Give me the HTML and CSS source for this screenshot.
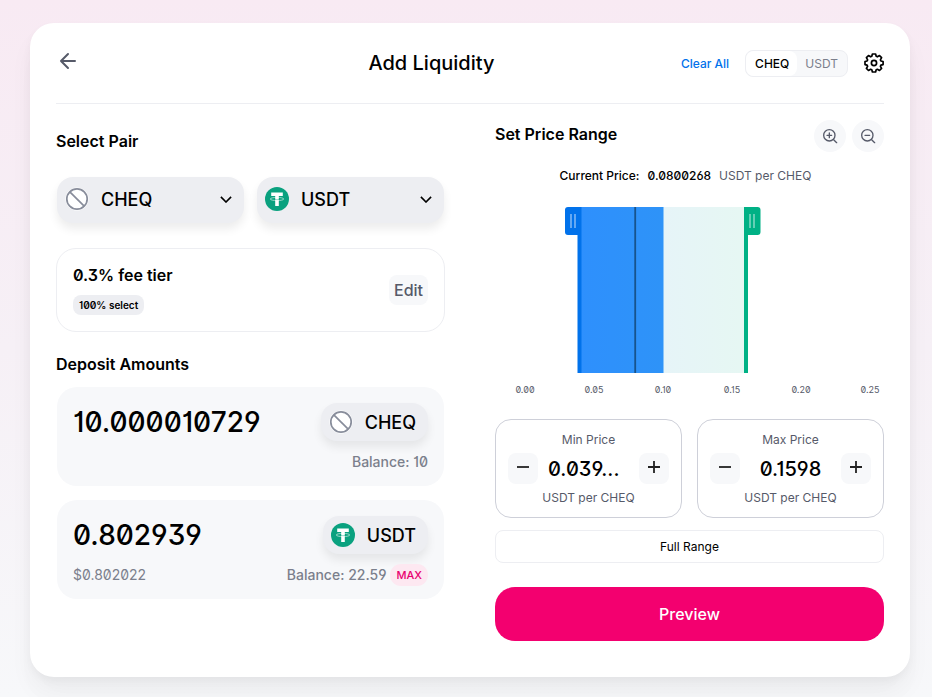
FILE: index.html
```html
<!DOCTYPE html>
<html lang="en">
<head>
<meta charset="utf-8">
<meta name="viewport" content="width=device-width, initial-scale=1">
<title>Add Liquidity</title>
<link rel="stylesheet" href="styles.css">
</head>
<body>
<svg class="defs" width="0" height="0" aria-hidden="true">
  <symbol id="token-empty" viewBox="0 0 24 24">
    <circle cx="12" cy="12" r="11.5" fill="#fff"/>
    <circle cx="12" cy="12" r="10.2" fill="none" stroke="#888d9b" stroke-width="1.7"/>
    <path d="M4.8 4.8 19.2 19.2" stroke="#888d9b" stroke-width="1.7"/>
  </symbol>
  <symbol id="token-usdt" viewBox="0 0 24 24">
    <circle cx="12" cy="12" r="12" fill="#0aa17f"/>
    <ellipse cx="12" cy="12" rx="6.800" ry="1.6" fill="none" stroke="#a5dccd" stroke-width=".9"/>
    <path d="M6.200 5.600h11.600v3.400H13.800v10h-3.600V9H6.200z" fill="#fff"/>
    <path d="M9 12.400q3 .6 6 0" fill="none" stroke="#0aa17f" stroke-width=".4"/>
  </symbol>
  <symbol id="chevron" viewBox="0 0 12 7">
    <path d="M.9.9 6 6 11.1.9" fill="none" stroke="#000" stroke-width="1.6"/>
  </symbol>
</svg>
<main class="card">
  <header class="header">
    <a class="back" href="#" aria-label="Back">
      <svg width="24" height="24" viewBox="0 0 24 24" fill="none" stroke="#565a69" stroke-width="2" stroke-linecap="round" stroke-linejoin="round"><path d="M19 12H5M12 19 5 12 12 5"/></svg>
    </a>
    <h1 class="title">Add Liquidity</h1>
    <div class="actions">
      <button class="clear" type="button">Clear All</button>
      <div class="toggle">
        <button class="toggle-item active" type="button">CHEQ</button>
        <button class="toggle-item" type="button">USDT</button>
      </div>
      <button class="settings" type="button" aria-label="Settings">
        <svg width="20" height="20" viewBox="0 0 20 20" fill="none" stroke="#000" stroke-width="1.700" stroke-linejoin="round"><circle cx="10" cy="10" r="2.600"/><path d="M8.400 1h3.200l.6 2.300 1.200.5 2.100-1.200 2.100 2.100-1.200 2.100.5 1.200 2.200.5v3.100l-2.200.5-.5 1.200 1.200 2.100-2.100 2.100-2.100-1.200-1.200.5-.6 2.200H8.400l-.6-2.200-1.200-.5-2.100 1.200-2.100-2.100 1.200-2.100-.5-1.200L1 11.600V8.500L3.100 8l.5-1.200-1.200-2.100 2.100-2.100 2.100 1.200 1.200-.5z"/></svg>
      </button>
    </div>
  </header>

  <div class="columns">
    <section class="left">
      <h2 class="heading">Select Pair</h2>
      <div class="pair">
        <button class="token-select" type="button"><svg class="token"><use href="#token-empty"/></svg><span class="symbol">CHEQ</span><svg class="chevron"><use href="#chevron"/></svg></button>
        <button class="token-select" type="button"><svg class="token"><use href="#token-usdt"/></svg><span class="symbol">USDT</span><svg class="chevron"><use href="#chevron"/></svg></button>
      </div>
      <div class="fee">
        <div class="fee-info">
          <div class="fee-name">0.3% fee tier</div>
          <div class="badge">100% select</div>
        </div>
        <button class="edit" type="button">Edit</button>
      </div>
      <h2 class="heading">Deposit Amounts</h2>
      <div class="deposits">
        <div class="deposit">
          <div class="row">
            <input class="amount" type="text" aria-label="CHEQ amount" value="10.000010729">
            <button class="pill" type="button"><svg class="token"><use href="#token-empty"/></svg>CHEQ</button>
          </div>
          <div class="row detail">
            <span></span>
            <span class="balance">Balance: 10</span>
          </div>
        </div>
        <div class="deposit">
          <div class="row">
            <input class="amount" type="text" aria-label="USDT amount" value="0.802939">
            <button class="pill" type="button"><svg class="token"><use href="#token-usdt"/></svg>USDT</button>
          </div>
          <div class="row detail">
            <span class="fiat">$0.802022</span>
            <span class="balance">Balance: 22.59 <button class="max" type="button">MAX</button></span>
          </div>
        </div>
      </div>
    </section>

    <section class="right">
      <div class="range-head">
        <h2 class="heading">Set Price Range</h2>
        <div class="zooms">
          <button class="zoom" type="button" aria-label="Zoom in"><svg width="16" height="16" viewBox="0 0 24 24" fill="none" stroke="#565a69" stroke-width="2" stroke-linecap="round" stroke-linejoin="round"><circle cx="11" cy="11" r="8.500"/><path d="m22 22-4.500-4.500M11 7.500v7M7.500 11h7"/></svg></button>
          <button class="zoom" type="button" aria-label="Zoom out"><svg width="16" height="16" viewBox="0 0 24 24" fill="none" stroke="#565a69" stroke-width="2" stroke-linecap="round" stroke-linejoin="round"><circle cx="11" cy="11" r="8.500"/><path d="m22 22-4.500-4.500M7.500 11h7"/></svg></button>
        </div>
      </div>
      <p class="current"><span>Current Price:</span><span>0.0800268</span><span class="unit">USDT per CHEQ</span></p>
      <svg class="chart" viewBox="0 0 389 196" role="img" aria-label="Liquidity by price">
        <defs>
          <linearGradient id="range"><stop offset="0" stop-color="#0172eb"/><stop offset="1" stop-color="#00b185"/></linearGradient>
        </defs>
        <rect x="83" y="4" width="85.500" height="166" fill="#3393ff"/>
        <rect x="83" y="4" width="168" height="166" fill="url(#range)" opacity=".1"/>
        <rect x="139.300" y="4" width="1.800" height="166" fill="#17538c"/>
        <path d="M86.500 4V170h-4V32H73q-3 0-3-3V7q0-3 3-3z" fill="#0172eb"/>
        <path d="M249 4V170h4V32h9.500q3 0 3-3V7q0-3-3-3z" fill="#00b185"/>
        <path d="M76 11v14M80 11v14M255 11v14M259 11v14" stroke="#fff" stroke-opacity=".65" stroke-width="1.200"/>
        <g class="ticks">
          <text x="30" y="190">0.00</text>
          <text x="99" y="190">0.05</text>
          <text x="168" y="190">0.10</text>
          <text x="237" y="190">0.15</text>
          <text x="306" y="190">0.20</text>
          <text x="375" y="190">0.25</text>
        </g>
      </svg>
      <div class="prices">
        <div class="price">
          <label class="price-label" for="min">Min Price</label>
          <div class="stepper">
            <button class="step" type="button" aria-label="Decrease min price"><svg width="14" height="14" viewBox="0 0 14 14"><path d="M1 7h12" stroke="#222" stroke-width="1.800"/></svg></button>
            <input class="price-value truncated" id="min" type="text" value="0.039...">
            <button class="step" type="button" aria-label="Increase min price"><svg width="14" height="14" viewBox="0 0 14 14"><path d="M1 7h12M7 1v12" stroke="#222" stroke-width="1.800"/></svg></button>
          </div>
          <span class="price-label">USDT per CHEQ</span>
        </div>
        <div class="price">
          <label class="price-label" for="max">Max Price</label>
          <div class="stepper">
            <button class="step" type="button" aria-label="Decrease max price"><svg width="14" height="14" viewBox="0 0 14 14"><path d="M1 7h12" stroke="#222" stroke-width="1.800"/></svg></button>
            <input class="price-value" id="max" type="text" value="0.1598">
            <button class="step" type="button" aria-label="Increase max price"><svg width="14" height="14" viewBox="0 0 14 14"><path d="M1 7h12M7 1v12" stroke="#222" stroke-width="1.800"/></svg></button>
          </div>
          <span class="price-label">USDT per CHEQ</span>
        </div>
      </div>
      <button class="full" type="button">Full Range</button>
      <button class="preview" type="button">Preview</button>
    </section>
  </div>
</main>
</body>
</html>
```
FILE: styles.css
```css
* {
  box-sizing: border-box;
}

body {
  margin: 0;
  min-height: 100vh;
  padding: 23px 22px 20px 30px;
  font-family: Inter, sans-serif;
  font-size: 16px;
  font-feature-settings: "zero", "ss01", "cv01";
  color: #000;
  background: linear-gradient(#f8eaf3, #f6f0f6 50%, #f7f8fa);
}

h1, h2, p {
  margin: 0;
}

button, input {
  margin: 0;
  padding: 0;
  border: 0;
  background: none;
  font: inherit;
  font-feature-settings: inherit;
  color: inherit;
}

button {
  cursor: pointer;
}

svg {
  display: block;
  flex: none;
}

.defs {
  position: absolute;
}

.card {
  max-width: 880px;
  margin: 0 auto;
  padding: 0 26px 36px;
  border-radius: 24px;
  background: #fff;
  box-shadow: 0 0 1px rgba(0, 0, 0, .01), 0 4px 8px rgba(0, 0, 0, .04), 0 16px 24px rgba(0, 0, 0, .04), 0 24px 32px rgba(0, 0, 0, .01);
}

.header {
  display: flex;
  justify-content: space-between;
  align-items: center;
  height: 81px;
  border-bottom: 1px solid #edeef2;
}

.back {
  width: 126px;
  height: 28px;
}

.title {
  font-size: 20px;
  font-weight: 500;
}

.actions {
  display: flex;
  justify-content: flex-end;
  align-items: center;
  gap: 16px;
  font-size: 12px;
  font-weight: 500;
}

.clear {
  color: #0172eb;
}

.toggle {
  display: flex;
  border: 1px solid #edeef2;
  border-radius: 8px;
  background: #f7f8fa;
}

.toggle-item {
  height: 25px;
  padding: 0 9px 0 8px;
  border-radius: 8px;
  color: #7b7f8c;
  font-weight: 400;
}

.toggle-item.active {
  padding: 0 8px 0 9px;
  background: #fff;
  color: #000;
  font-weight: 500;
}

.columns {
  display: grid;
  grid-template-columns: repeat(2, minmax(0, 1fr));
  gap: 50px;
  padding-top: 16px;
}

.heading {
  font-size: 16px;
  font-weight: 600;
  line-height: 20px;
}

.left {
  padding-top: 11px;
}

.pair {
  display: grid;
  grid-template-columns: 1fr 1fr;
  gap: 13px;
  margin-top: 26px;
  padding: 0 1px;
}

.token-select, .pill {
  display: flex;
  align-items: center;
  gap: 12px;
  border-radius: 16px;
  background: #edeef2;
  box-shadow: 0 6px 10px rgba(0, 0, 0, .075);
  font-size: 18px;
  font-weight: 500;
}

.token-select {
  height: 46px;
  padding: 0 12px 2px 8px;
}

.token {
  width: 24px;
  height: 24px;
}

.symbol {
  flex: 1;
  text-align: left;
}

.chevron {
  width: 12px;
  height: 7px;
}

.fee {
  display: flex;
  justify-content: space-between;
  align-items: center;
  height: 84px;
  margin: 25px 0 22px;
  padding: 0 16px;
  border: 1px solid #edeef2;
  border-radius: 20px;
}

.fee-info {
  display: grid;
  justify-items: start;
  gap: 10px;
}

.fee-name {
  font-weight: 600;
  line-height: 20px;
}

.badge {
  padding: 0 6px;
  border-radius: 8px;
  background: #edeef2;
  font-size: 10px;
  font-weight: 600;
  line-height: 20px;
}

.edit {
  height: 30px;
  padding: 0 5px;
  border-radius: 8px;
  background: #f7f8fa;
  color: #565a69;
  font-weight: 500;
}

.deposits {
  display: grid;
  gap: 14px;
  margin-top: 13px;
  padding: 0 1px;
}

.deposit {
  padding: 16px 16px 12px;
  border-radius: 20px;
  background: #f7f8fa;
}

.row {
  display: flex;
  justify-content: space-between;
  align-items: center;
}

.amount {
  flex: 1;
  width: 0;
  min-width: 0;
  font-size: 28px;
  font-weight: 500;
}

.pill {
  height: 38px;
  padding: 0 12px 0 8px;
}

.detail {
  height: 33px;
  padding-top: 8px;
  font-size: 14px;
  color: #7b7f8c;
}

.balance {
  display: flex;
  align-items: center;
  gap: 4px;
  font-weight: 500;
}

.max {
  height: 22px;
  padding: 0 6px;
  border-radius: 12px;
  background: #fde8f1;
  color: #e8006f;
  font-size: 11px;
  font-weight: 500;
}

.range-head {
  display: flex;
  justify-content: space-between;
  height: 32px;
}

.range-head .heading {
  line-height: 28px;
}

.zooms {
  display: flex;
  gap: 6px;
}

.zoom {
  display: grid;
  place-items: center;
  width: 32px;
  height: 32px;
  border-radius: 50%;
  background: #f7f8fa;
}

.current {
  display: flex;
  justify-content: center;
  gap: 8px;
  margin: 16px 0 19px;
  padding-right: 8px;
  font-size: 12px;
  font-weight: 500;
  line-height: 16px;
}

.unit {
  font-weight: 400;
  color: #565a69;
}

.chart {
  width: 100%;
  height: auto;
}

.ticks {
  font-size: 9px;
  fill: #565a69;
  text-anchor: middle;
}

.prices {
  display: grid;
  grid-template-columns: 1fr 1fr;
  gap: 15px;
  margin-top: 20px;
}

.price {
  height: 99px;
  padding: 12px;
  border: 1px solid #ced0d9;
  border-radius: 16px;
  text-align: center;
}

.price-label {
  display: block;
  font-size: 12px;
  line-height: 16px;
  color: #565a69;
}

.stepper {
  display: flex;
  align-items: center;
  margin: 5px 0 6px;
}

.step {
  display: grid;
  place-items: center;
  flex: none;
  width: 30px;
  height: 31px;
  padding-bottom: 3px;
  border-radius: 8px;
  background: #f7f8fa;
}

.price-value {
  flex: 1;
  width: 0;
  min-width: 0;
  padding: 0 10px;
  font-size: 20px;
  font-weight: 500;
  text-align: center;
}

.price-value.truncated {
  text-align: left;
}

.full, .preview {
  display: block;
  width: 100%;
}

.full {
  height: 33px;
  margin: 12px 0 24px;
  border: 1px solid #edeef2;
  border-radius: 8px;
  font-size: 12px;
}

.preview {
  height: 54px;
  border-radius: 20px;
  background: #f3006f;
  color: #fff;
  font-weight: 500;
}
```
